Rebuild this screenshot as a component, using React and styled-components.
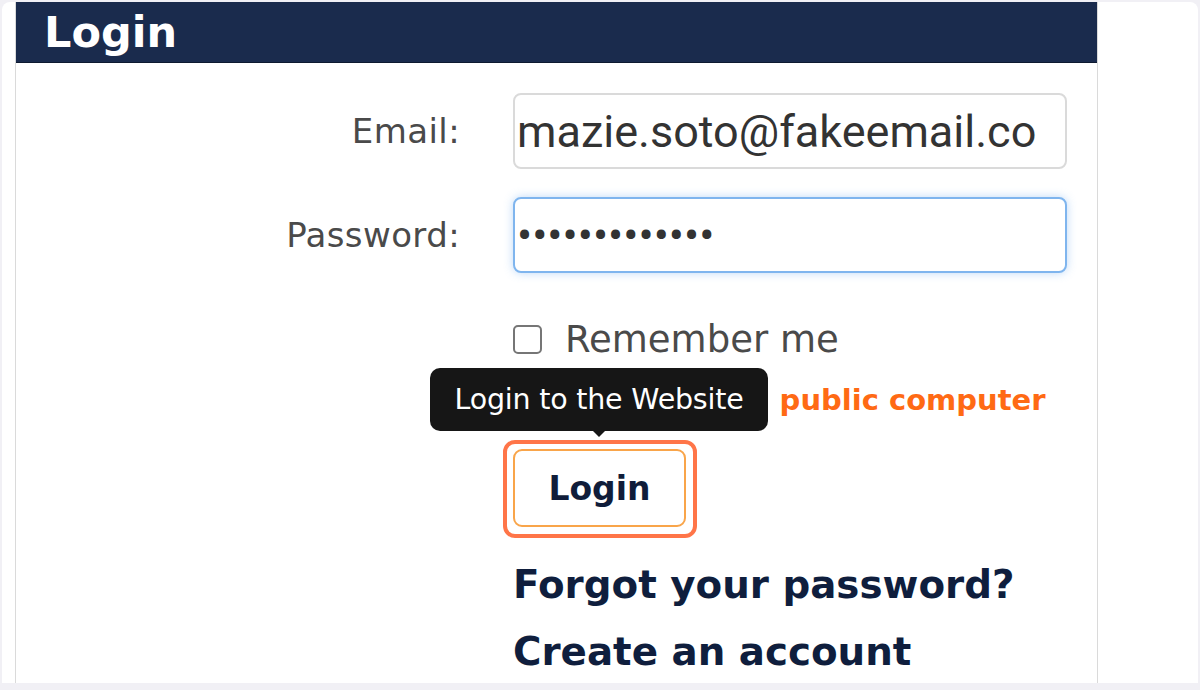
import React from "react"
import styled, { createGlobalStyle } from "styled-components"

const Global = createGlobalStyle`
  body {
    margin: 0;
    background: #f1f0f5;
    font-family: "DejaVu Sans", "Liberation Sans", sans-serif;
  }
`

const App = () => {
  return (
    <>
      <Global />
      <Frame>
        <Panel>
          <Header>Login</Header>
          <Form>
            <Label>Email:</Label>
            <TextInput type="email" defaultValue="mazie.soto@fakeemail.co" readOnly />

            <Label $top={28}>Password:</Label>
            <TextInput type="password" defaultValue="secretpass123" readOnly $focused $top={28} />

            <CheckRow $top={50}>
              <Box type="checkbox" />
              Remember me
            </CheckRow>

            <Warning $top={27}>Do not use on a public computer</Warning>

            <ButtonWrap $top={31}>
              <Tooltip>Login to the Website</Tooltip>
              <Highlight />
              <LoginButton>Login</LoginButton>
            </ButtonWrap>

            <BigLink $top={35}>Forgot your password?</BigLink>
            <BigLink $top={21}>Create an account</BigLink>
          </Form>
        </Panel>
      </Frame>
    </>
  )
}

export default App

const Frame = styled.div`
  margin: 2px 2px 0;
  height: 681px;
  background: #fff;
  border-radius: 8px 8px 0 0;
  padding-left: 13px;
  overflow: hidden;
`

const Panel = styled.div`
  width: 1081px;
  height: 100%;
  border-left: 1px solid #dadada;
  border-right: 1px solid #dadada;
`

const Header = styled.div`
  height: 60px;
  background: #1a2b4d;
  border-bottom: 1px solid #0e1a30;
  padding-left: 28px;
  display: flex;
  align-items: center;
  color: #fff;
  font-size: 43px;
  font-weight: bold;
`

const Form = styled.div`
  display: grid;
  grid-template-columns: 444px 554px;
  column-gap: 53px;
  padding-top: 30px;
  align-items: center;
`

const Label = styled.div`
  grid-column: 1;
  margin-top: ${p => p.$top || 0}px;
  text-align: right;
  font-size: 34px;
  color: #4a4a4a;
  letter-spacing: 0.4px;
`

const TextInput = styled.input`
  grid-column: 2;
  margin-top: ${p => p.$top || 0}px;
  box-sizing: border-box;
  width: 554px;
  height: 76px;
  padding: 0 2px;
  border-radius: 8px;
  border: ${p => (p.$focused ? "2px solid #7fb5ee" : "2px solid #dadada")};
  box-shadow: ${p => (p.$focused ? "0 0 10px rgba(110, 170, 240, 0.45)" : "none")};
  font-family: Roboto, "Liberation Sans", sans-serif;
  font-size: 45px;
  color: #333;
  outline: none;
  background: #fff;
`

const CheckRow = styled.label`
  grid-column: 2;
  margin-top: ${p => p.$top || 0}px;
  height: 32px;
  display: flex;
  align-items: center;
  gap: 23px;
  font-size: 37px;
  color: #4a4a4a;
`

const Box = styled.input`
  appearance: none;
  margin: 0;
  width: 29px;
  height: 29px;
  box-sizing: border-box;
  border: 2px solid #767676;
  border-radius: 5px;
  background: #fff;
`

const Warning = styled.div`
  grid-column: 2;
  margin-top: ${p => p.$top || 0}px;
  line-height: 36px;
  font-size: 29px;
  font-weight: bold;
  color: #ff6a14;
  white-space: nowrap;
`

const ButtonWrap = styled.div`
  grid-column: 2;
  margin-top: ${p => p.$top || 0}px;
  position: relative;
  width: 173px;
  height: 78px;
`

const LoginButton = styled.button`
  box-sizing: border-box;
  width: 100%;
  height: 100%;
  background: #fff;
  border: 2px solid #f9a54a;
  border-radius: 9px;
  font-family: "DejaVu Sans", sans-serif;
  font-size: 33px;
  font-weight: bold;
  color: #101d3a;
  cursor: pointer;
`

const Highlight = styled.span`
  position: absolute;
  top: -9px;
  left: -10px;
  right: -11px;
  bottom: -11px;
  border: 4px solid #ff7548;
  border-radius: 12px;
  pointer-events: none;
`

const Tooltip = styled.div`
  position: absolute;
  left: -83px;
  bottom: calc(100% + 18px);
  width: 338px;
  height: 63px;
  box-sizing: border-box;
  background: #161616;
  border-radius: 10px;
  color: #fff;
  font-family: "DejaVu Sans", sans-serif;
  font-size: 28.5px;
  letter-spacing: -0.2px;
  display: flex;
  align-items: center;
  justify-content: center;
  white-space: nowrap;
  z-index: 2;

  &::after {
    content: "";
    position: absolute;
    left: 50%;
    bottom: -6px;
    margin-left: -6px;
    border-left: 6px solid transparent;
    border-right: 6px solid transparent;
    border-top: 6px solid #161616;
  }
`

const BigLink = styled.a`
  grid-column: 2;
  margin-top: ${p => p.$top || 0}px;
  line-height: 46px;
  font-size: 38.8px;
  font-weight: bold;
  color: #0f1e3d;
  white-space: nowrap;
  cursor: pointer;
`
